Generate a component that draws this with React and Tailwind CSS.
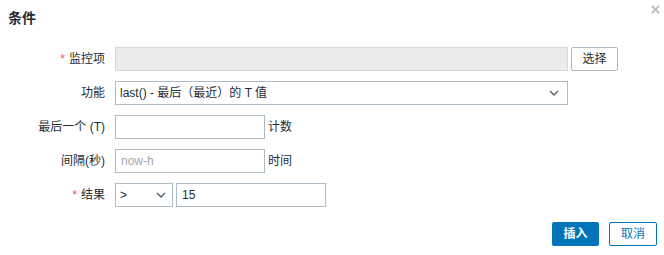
import { useState } from 'react'

/* 下拉箭头 */
function Chevron() {
  return (
    <svg className="w-[10px] h-[6px]" viewBox="0 0 10 6" fill="none" stroke="#4f5a61" strokeWidth="1.3">
      <path d="M1 1l4 4 4-4" />
    </svg>
  )
}

function Label({ required, children }) {
  return (
    <div className="flex items-center justify-end h-[24px] text-[12px] text-[#1f2c33] whitespace-nowrap">
      {required && <span className="text-[#e45959] mr-[4px]">*</span>}
      {children}
    </div>
  )
}

export default function App() {
  const [result, setResult] = useState('15')

  return (
    <div
      className="relative w-[664px] h-[255px] bg-white overflow-hidden"
      style={{ fontFamily: '"Liberation Sans", Arial, "Noto Sans CJK SC", sans-serif' }}
    >
      {/* ── 标题 ── */}
      <div className="pt-[8px] pl-[8px] h-[47px]">
        <h2 className="text-[14px] leading-[20px] font-bold text-[#1f2c33]">条件</h2>
      </div>
      <button className="absolute top-[4px] right-[4px] w-[10px] h-[10px] flex items-center justify-center">
        <svg viewBox="0 0 10 10" className="w-[9px] h-[9px]" stroke="#b3bec5" strokeWidth="2.2">
          <path d="M1 1l8 8M9 1l-8 8" />
        </svg>
      </button>

      {/* ── 表单 ── */}
      <div className="grid grid-cols-[105px_1fr] gap-x-[10px] gap-y-[10px]">
        <Label required>监控项</Label>
        <div className="flex items-center gap-[3px]">
          <div className="w-[453px] h-[24px] bg-[#ebebeb] border border-[#d3dade]" />
          <button className="w-[47px] h-[24px] border border-[#acbbc4] rounded-[2px] bg-white text-[12px] text-[#1f2c33]">
            选择
          </button>
        </div>

        <Label>功能</Label>
        <div className="w-[453px] h-[24px] border border-[#acbbc4] flex items-center justify-between pl-[4px] pr-[8px] text-[12px] text-[#1f2c33]">
          <span>last() - 最后（最近）的 T 值</span>
          <Chevron />
        </div>

        <Label>最后一个 (T)</Label>
        <div className="flex items-center gap-[3px] text-[12px] text-[#1f2c33]">
          <div className="w-[150px] h-[24px] border border-[#acbbc4]" />
          <span>计数</span>
        </div>

        <Label>间隔(秒)</Label>
        <div className="flex items-center gap-[3px] text-[12px] text-[#1f2c33]">
          <div className="w-[150px] h-[24px] border border-[#acbbc4] flex items-center pl-[5px] text-[#9fa9ae]">now-h</div>
          <span>时间</span>
        </div>

        <Label required>结果</Label>
        <div className="flex items-center gap-[3px] text-[12px] text-[#1f2c33]">
          <div className="w-[58px] h-[24px] border border-[#acbbc4] flex items-center justify-between pl-[4px] pr-[6px]">
            <span>&gt;</span>
            <Chevron />
          </div>
          <input
            value={result}
            onChange={(e) => setResult(e.target.value)}
            className="w-[150px] h-[24px] border border-[#acbbc4] pl-[5px] outline-none text-[12px]"
          />
        </div>
      </div>

      {/* ── 按钮 ── */}
      <div className="flex justify-end gap-[10px] pr-[7px] mt-[15px]">
        <button className="w-[47px] h-[24px] rounded-[2px] bg-[#0275b8] text-white text-[12px] font-bold">插入</button>
        <button className="w-[48px] h-[24px] rounded-[2px] border border-[#0275b8] bg-white text-[#0275b8] text-[12px]">取消</button>
      </div>
    </div>
  )
}
